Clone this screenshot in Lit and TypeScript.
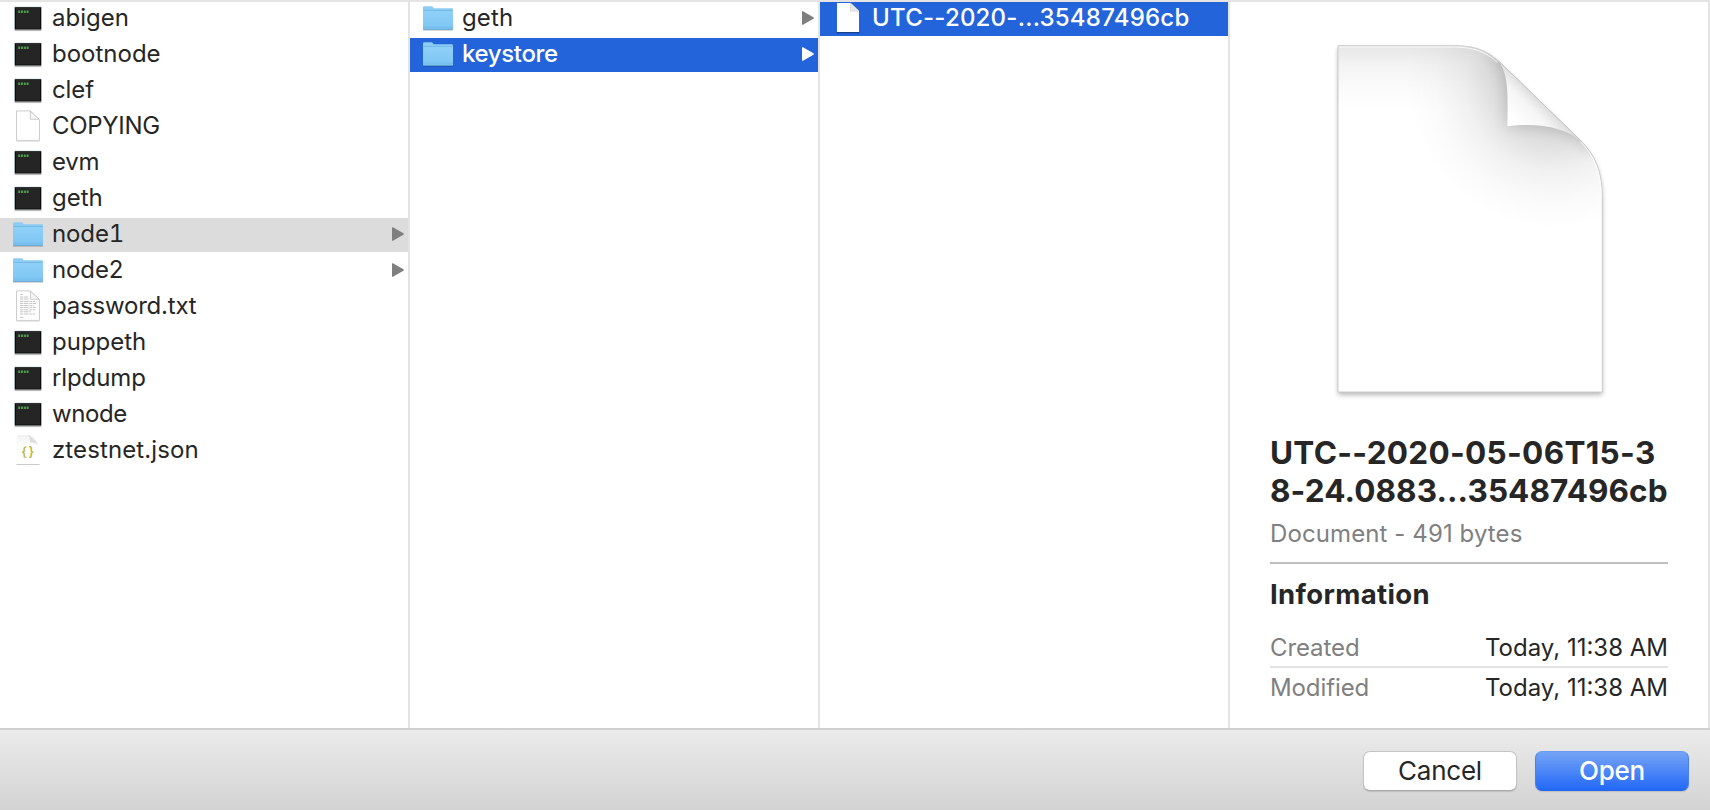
import { LitElement, html, css, svg, nothing } from "lit";
import { customElement, property } from "lit/decorators.js";
import { classMap } from "lit/directives/class-map.js";
import { styleMap } from "lit/directives/style-map.js";

type Kind = "exec" | "doc" | "text" | "json" | "folder" | "docSelected";
interface Entry {
  name: string;
  kind: Kind;
  tracking?: number;
  state?: "active" | "path";
}

const COLUMNS: Entry[][] = [
  [
    { name: "abigen", kind: "exec" },
    { name: "bootnode", kind: "exec" },
    { name: "clef", kind: "exec", tracking: -0.1 },
    { name: "COPYING", kind: "doc", tracking: -0.3 },
    { name: "evm", kind: "exec", tracking: -0.2 },
    { name: "geth", kind: "exec" },
    { name: "node1", kind: "folder", state: "path", tracking: -0.1 },
    { name: "node2", kind: "folder", tracking: -0.1 },
    { name: "password.txt", kind: "text", tracking: -0.2 },
    { name: "puppeth", kind: "exec" },
    { name: "rlpdump", kind: "exec", tracking: -0.1 },
    { name: "wnode", kind: "exec", tracking: -0.4 },
    { name: "ztestnet.json", kind: "json", tracking: 0.1 },
  ],
  [
    { name: "geth", kind: "folder", tracking: 0.15 },
    { name: "keystore", kind: "folder", state: "active", tracking: -0.35 },
  ],
  [{ name: "UTC--2020-...35487496cb", kind: "docSelected", state: "active", tracking: 0.22 }],
];

const page = svg`
  <path d="M4.5 .9H18.2L27.5 9.8V30.4H4.5Z" fill="#fff" stroke="#cdcdcd" stroke-width="1"/>
  <path d="M18.4 1.2V9.2H27.2Z" fill="#f8f8f8" stroke="#c4c4c4" stroke-width=".9"/>
  <path d="M4.3 31.1H27.7" stroke="#d6d6d6" stroke-width="1"/>`;

const ICONS = {
  exec: svg`
    <rect x="2" y="4.6" width="28" height="23.2" rx="1" fill="#cfe0e3"/>
    <path d="M2.6 28.4H29.4" stroke="#b9b9b9" stroke-width="1.4"/>
    <rect x="2.8" y="5.2" width="26.4" height="22.3" fill="#0b0b0b"/>
    <rect x="4" y="6" width="24" height="20.6" fill="#252525"/>
    <path d="M6.2 9.8H16.6" stroke="#4f9a4d" stroke-width="2.4" stroke-dasharray="2 .8"/>`,
  doc: page,
  text: svg`${page}
    <path d="M8 4.6H11M8 7H16M8 9H17M8 11.4H23M8 13.4H24M8 15.6H22M8 17.6H24M8 19.8H23M8 21.8H19M8 24H23M8 27.4H12"
      stroke="#c4c4c4" stroke-width="1" stroke-dasharray="3 .6 5 .8"/>`,
  json: svg`
    <defs><linearGradient id="j" x1="0" y1="0" x2="0" y2="1">
      <stop offset="0" stop-color="#f1f1f1"/><stop offset=".4" stop-color="#fff"/></linearGradient></defs>
    <path d="M5 1H16C19 1 26 7 26 11V30H5Z" fill="url(#j)"/>
    <path d="M16 1C18 3 18 6 18 8.5C22 8.2 25 9 26 11.5C26 8 18.5 1 16 1Z" fill="#dedede"/>
    <path d="M4.5 30.5H27.5" stroke="#cacaca" stroke-width="1"/>
    <text x="16.6" y="21.6" text-anchor="middle" font-family="Inter, sans-serif" font-size="12.5" font-weight="600"
      letter-spacing="1.6" fill="#b9b83e">{}</text>`,
  folder: svg`
    <defs><linearGradient id="f" x1="0" y1="0" x2="0" y2="1">
      <stop offset="0" stop-color="#8fd0f8"/><stop offset="1" stop-color="#7cc5f3"/></linearGradient></defs>
    <path d="M1 28.1H31" stroke="#000" stroke-opacity=".22" stroke-width="1.2"/>
    <path d="M1 27V5.6Q1 4.2 2.4 4.2H9.4Q10.3 4.2 10.9 5L11.7 6.2H29.8Q31 6.2 31 7.4V27Z" fill="#8ccbf2"/>
    <path d="M1.4 8.6H30.6" stroke="#6fb4e2" stroke-width=".8"/>
    <rect x="1" y="9" width="30" height="18.6" rx=".8" fill="url(#f)"/>
    <path d="M1 25.2H31" stroke="#6eb6e4" stroke-width=".6"/>
    <path d="M1.2 27.4H30.8" stroke="#62a3cd" stroke-width=".9"/>`,
  docSelected: svg`
    <path d="M4.6 30.6H27.4" stroke="#173f8d" stroke-width="1.4"/>
    <path d="M5 1H18.5L27 9V30H5Z" fill="#fff"/>
    <path d="M18.5 1V9H27Z" fill="#e9e9e9" stroke="#c9c9c9" stroke-width=".6"/>`,
};

@customElement("file-row")
class FileRow extends LitElement {
  @property({ attribute: false }) entry!: Entry;

  static styles = css`
    :host { display: block; }
    .row { display: flex; align-items: flex-start; height: 34px; padding: 0 4px 0 12px; color: #262626; }
    .path { background: #dcdcdc; }
    .active { background: #2464db; color: #fff; }
    .icon { flex: none; width: 32px; height: 34px; margin-right: 8px; }
    .name { flex: 1; white-space: nowrap; font-size: 24px; line-height: 31px; }
    .path .name { font-variant-numeric: tabular-nums; }
    .active .name { font-weight: 500; }
    .arrow { flex: none; width: 12px; height: 14px; margin-top: 9px; fill: #7f7f7f; }
    .active .arrow { fill: #fff; }
  `;

  render() {
    const { name, kind, state, tracking = 0 } = this.entry;
    return html`<div class=${classMap({ row: true, active: state === "active", path: state === "path" })}>
      <svg class="icon" viewBox="0 0 32 34">${ICONS[kind]}</svg>
      <span class="name" style=${styleMap({ letterSpacing: `${tracking}px` })}>${name}</span>
      ${kind === "folder"
        ? html`<svg class="arrow" viewBox="0 0 12 14"><path d="M0 .8Q0-.2 1 .3L11.4 6.2Q12.4 7 11.4 7.8L1 13.7Q0 14.2 0 13.2Z"/></svg>`
        : nothing}
    </div>`;
  }
}

@customElement("document-preview")
class DocumentPreview extends LitElement {
  static styles = css`
    :host { display: block; width: 340px; height: 400px; }
    .art { display: block; width: 340px; height: 400px; }
  `;

  render() {
    const outline = "M114 77H455C530 77 560 92 598 125L840 360C885 402 907 455 907 530V1116H114Z";
    return html`<svg class="art" viewBox="0 0 1020 1200">
      <defs>
        <clipPath id="clip"><path d=${outline} /></clipPath>
        <linearGradient id="top" x1="0" y1="77" x2="0" y2="270" gradientUnits="userSpaceOnUse">
          <stop offset="0" stop-color="#e6e6e6" /><stop offset=".3" stop-color="#f3f3f3" /><stop offset=".65" stop-color="#fbfbfb" /><stop offset="1" stop-color="#fff" />
        </linearGradient>
        <linearGradient id="curl" x1="722" y1="245" x2="655" y2="312" gradientUnits="userSpaceOnUse">
          <stop offset="0" stop-color="#dedede" /><stop offset=".35" stop-color="#f5f5f5" /><stop offset="1" stop-color="#fff" />
        </linearGradient>
        <radialGradient id="wide" cx="760" cy="190" r="440" gradientUnits="userSpaceOnUse">
          <stop offset="0" stop-color="#000" stop-opacity=".24" />
          <stop offset=".34" stop-color="#000" stop-opacity=".15" />
          <stop offset=".6" stop-color="#000" stop-opacity=".055" />
          <stop offset=".8" stop-color="#000" stop-opacity=".018" />
          <stop offset="1" stop-color="#000" stop-opacity="0" />
        </radialGradient>
        <filter id="drop" x="-10%" y="-10%" width="120%" height="120%"><feGaussianBlur stdDeviation="8" /></filter>
        <filter id="near" filterUnits="userSpaceOnUse" x="300" y="-100" width="900" height="800"><feGaussianBlur stdDeviation="22" /></filter>
      </defs>
      <path d=${outline} transform="translate(0 9)" fill="#000" opacity=".28" filter="url(#drop)" />
      <path d=${outline} fill="url(#top)" />
      <g clip-path="url(#clip)">
        <path d=${outline} fill="url(#wide)" />
        <path d="M570 100L600 130C622 165 625 200 622 318C720 308 785 320 840 360L890 400L900 200L700 60Z" fill="#000" opacity=".16" filter="url(#near)" />
      </g>
      <path d=${outline} fill="none" stroke="#cbcbcb" stroke-width="3" />
      <path d="M117 81H455C525 81 556 96 592 127" fill="none" stroke="#fff" stroke-width="3" opacity=".8" />
      <path d="M842 366C881 405 903 455 903 530" fill="none" stroke="#fff" stroke-width="3" opacity=".8" />
      <path d="M598 125C622 165 625 200 622 318C720 308 785 320 840 360Z" fill="url(#curl)" />
      <path d="M598 125L840 360" stroke="#c6c6c6" stroke-width="3" />
    </svg>`;
  }
}

@customElement("app-root")
class AppRoot extends LitElement {
  static styles = css`
    :host { display: block; font-family: Inter, "Noto Sans", sans-serif; color: #262626; }
    .dialog { display: flex; flex-direction: column; box-sizing: border-box; width: 1710px; height: 810px; overflow: hidden; background: #fff; }
    .browser { display: flex; flex: 1; box-sizing: border-box; border-top: 2px solid #e4e4e4; border-right: 2px solid #e4e4e4; }
    .column { display: flex; flex-direction: column; gap: 2px; width: 408px; flex: none; border-right: 2px solid #e4e4e4; }
    .preview { flex: 1; display: flex; flex-direction: column; padding: 18px 40px 0; }
    .art { margin-left: 30px; }
    .title { margin-top: 14px; font-size: 31.5px; line-height: 38px; font-weight: 700; white-space: nowrap; }
    .line { display: block; letter-spacing: .3px; }
    .rest { letter-spacing: .08px; }
    .kind { margin-top: 9px; padding-bottom: 13px; border-bottom: 2px solid #bfbfbf; font-size: 24px; line-height: 30px; letter-spacing: .1px; color: #808080; }
    .heading { margin-top: 13px; font-size: 27.5px; line-height: 34px; font-weight: 700; letter-spacing: .35px; }
    .facts { margin-top: 22px; font-size: 24px; line-height: 30px; }
    .fact { display: flex; justify-content: space-between; padding-bottom: 3px; }
    .fact + .fact { border-top: 2px solid #e2e2e2; padding-top: 5px; }
    .label { color: #808080; letter-spacing: -.1px; }
    .footer { display: flex; flex: none; justify-content: flex-end; gap: 18px; height: 59px; padding: 21px 21px 0 0; border-top: 2px solid #d0d0d0; background: linear-gradient(#ebebeb, #d3d3d3); }
    .button { box-sizing: border-box; width: 154px; height: 40px; border-radius: 7px; border: 1px solid #c4c4c4; border-bottom-color: #aaa; padding: 0; background: #fff; color: #262626; font: 26px/38px Inter, sans-serif; letter-spacing: -.25px; text-align: center; box-shadow: 0 1px 1px rgba(0, 0, 0, .12); }
    .primary { border-color: #6c9af0 #4a80ee #2565ea; background: linear-gradient(#76a4f5, #2369f8); color: #fff; font-weight: 500; }
  `;

  render() {
    return html`<div class="dialog">
      <div class="browser">
        ${COLUMNS.map((entries) => html`<div class="column">
          ${entries.map((entry) => html`<file-row .entry=${entry}></file-row>`)}
        </div>`)}
        <div class="preview">
          <document-preview class="art"></document-preview>
          <div class="title"><span class="line">UTC--2020-05-06T15-3</span><span class="line rest">8-24.0883...35487496cb</span></div>
          <div class="kind">Document - 491 bytes</div>
          <div class="heading">Information</div>
          <div class="facts">
            <div class="fact"><span class="label">Created</span><span class="value">Today, 11:38 AM</span></div>
            <div class="fact"><span class="label">Modified</span><span class="value">Today, 11:38 AM</span></div>
          </div>
        </div>
      </div>
      <div class="footer">
        <button class="button">Cancel</button>
        <button class="button primary">Open</button>
      </div>
    </div>`;
  }
}
